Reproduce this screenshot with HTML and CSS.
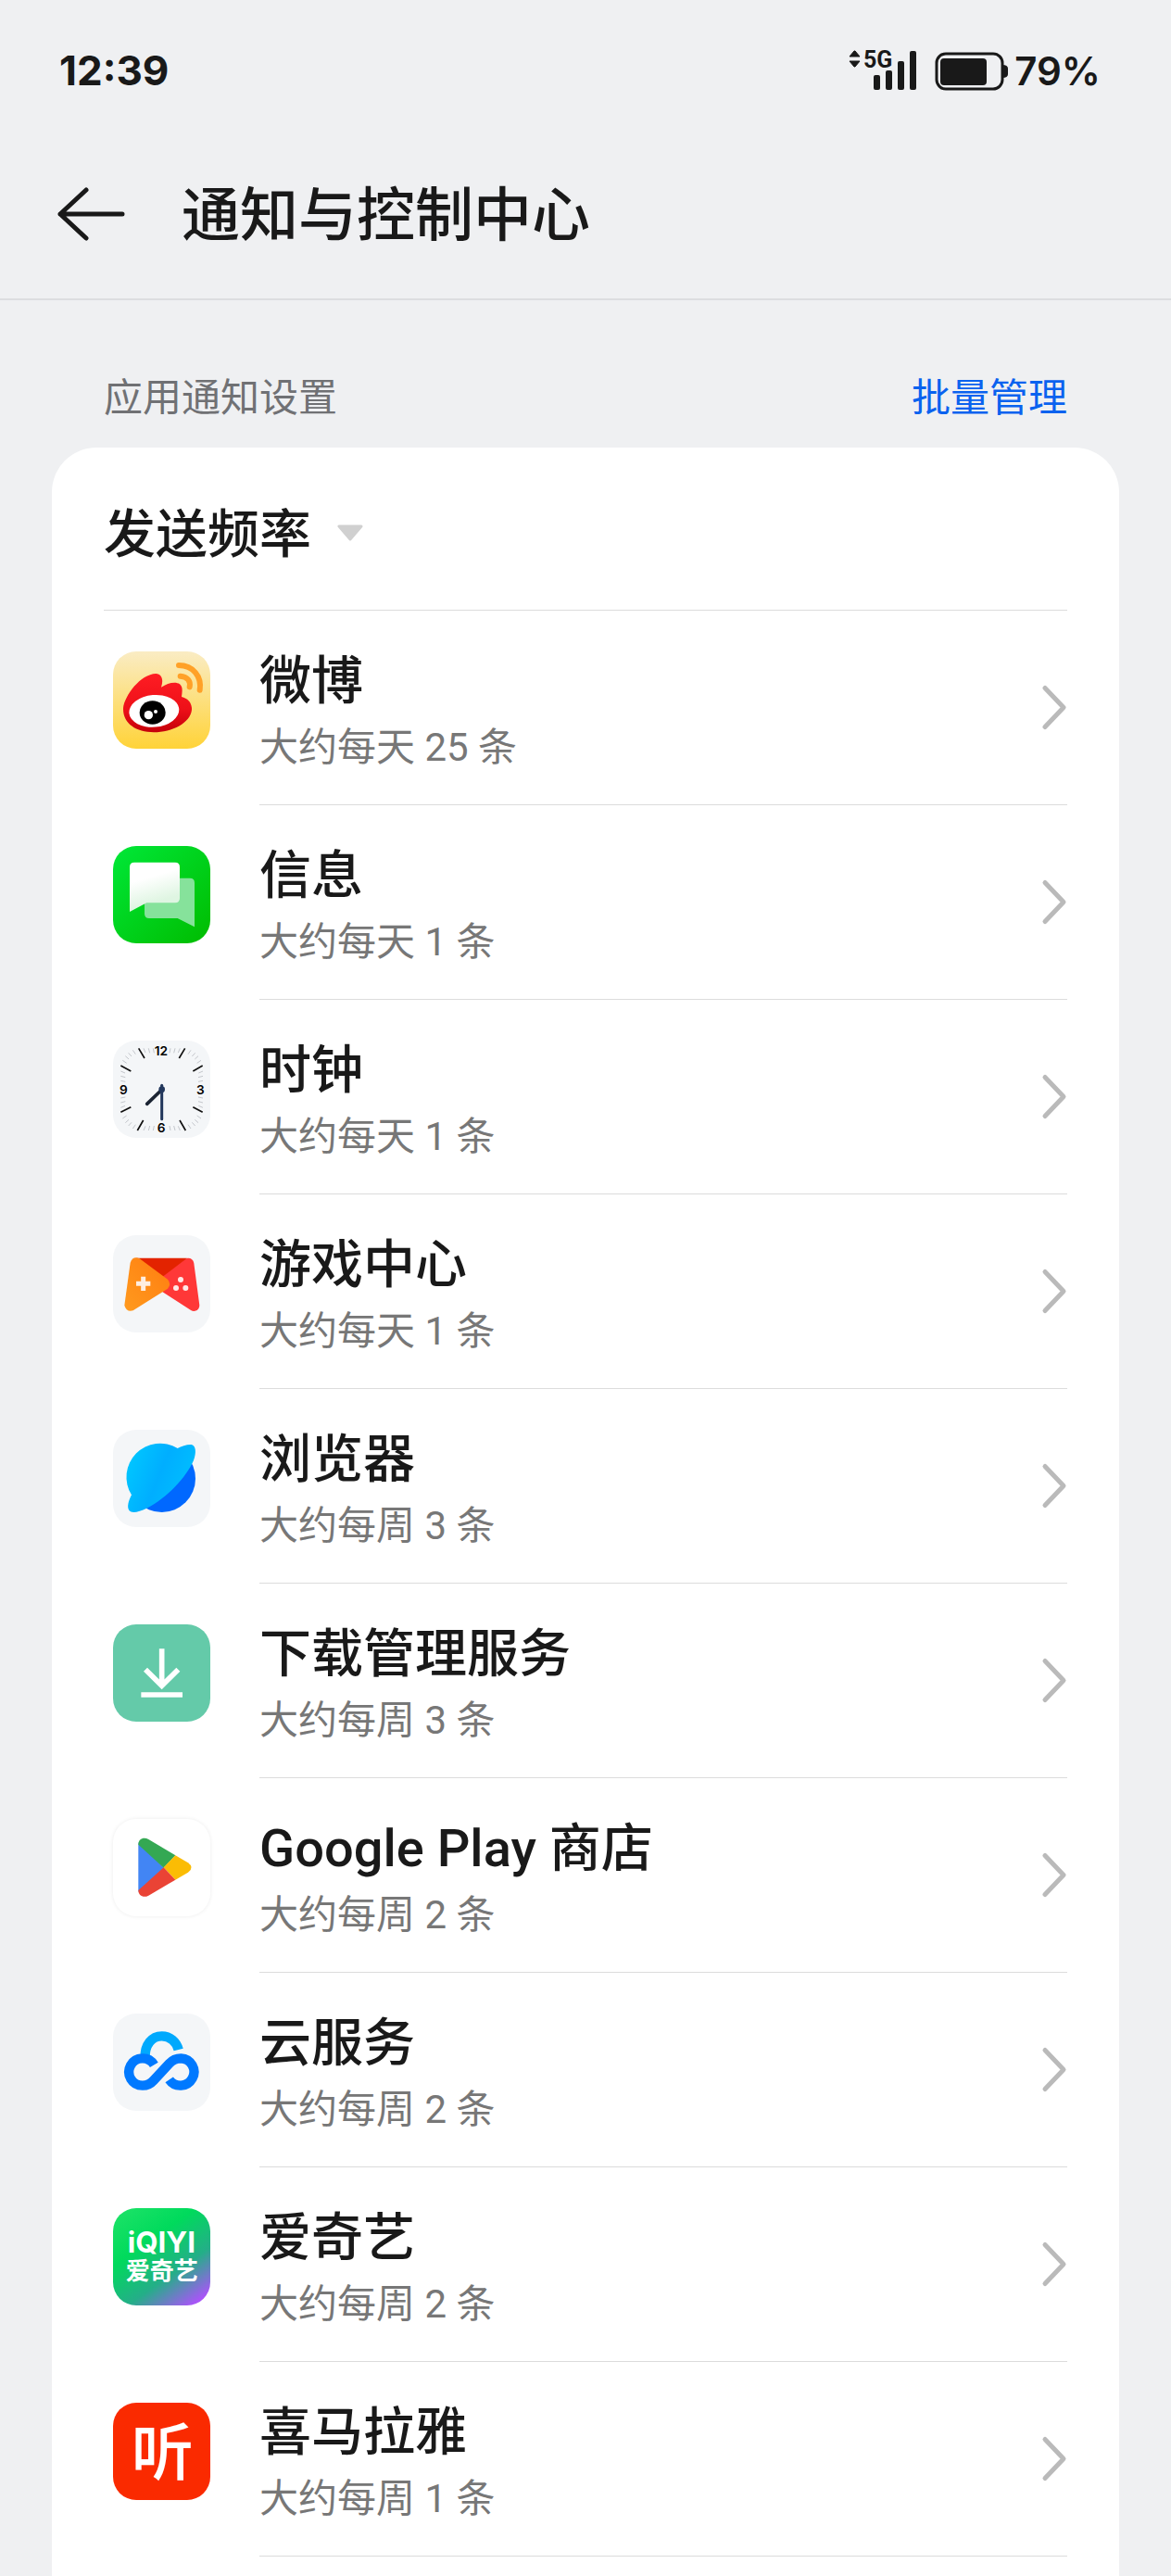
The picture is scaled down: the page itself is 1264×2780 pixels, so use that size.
FILE: index.html
```html
<!DOCTYPE html>
<html lang="zh-CN">
<head>
    <meta charset="UTF-8">
    <meta name="viewport" content="width=device-width, initial-scale=1.0">
    <title>通知与控制中心</title>
    <link rel="stylesheet" href="styles.css">
</head>
<body>
    <div class="status-bar">
        <span class="time">12:39</span>
        <div class="status-icons">
            <svg class="signal" width="76" height="56" viewBox="0 -4 76 56" aria-hidden="true">
                <path d="M2 9h11L8 3h-1zM2 14h11l-5 6h-1z" stroke="#191919" stroke-width="1" stroke-linejoin="round"/>
                <text x="17" y="21">5G</text>
                <rect x="28" y="29" width="7" height="16" rx="2"/>
                <rect x="41" y="24" width="7" height="21" rx="2"/>
                <rect x="54" y="14" width="7" height="31" rx="2"/>
                <rect x="67" y="3" width="7" height="42" rx="2"/>
            </svg>
            <svg class="battery" width="80" height="48" viewBox="0 0 80 48" aria-hidden="true">
                <rect x="2" y="6" width="71" height="38" rx="10" fill="none" stroke="#191919" stroke-width="3"/>
                <rect x="6" y="11" width="50" height="29" rx="4"/>
                <path d="M73 18q6 0 6 4v6q0 4-6 4z"/>
            </svg>
            <span class="percent">79%</span>
        </div>
    </div>

    <header class="title-bar">
        <button class="back" type="button" aria-label="返回">
            <svg width="76" height="64" viewBox="0 0 76 64" fill="none" stroke="#191919" stroke-width="5" stroke-linecap="round" stroke-linejoin="round">
                <path d="M33 6L5 32l28 26M5 32h67"/>
            </svg>
        </button>
        <h1>通知与控制中心</h1>
    </header>

    <main>
        <div class="section-head">
            <h2>应用通知设置</h2>
            <a href="#batch">批量管理</a>
        </div>

        <div class="card">
            <div class="sort">
                <select aria-label="排序">
                    <option>发送频率</option>
                </select>
                <svg width="28" height="18" viewBox="0 0 28 18" aria-hidden="true">
                    <path d="M2 2h24L14 16z" fill="#d0d0d0" stroke="#d0d0d0" stroke-width="3" stroke-linejoin="round"/>
                </svg>
            </div>

            <ul class="apps">
                <li>
                    <a class="app" href="#weibo">
                        <svg class="icon weibo" viewBox="66 69 315 315" aria-hidden="true">
                            <defs>
                                <linearGradient id="red" x1="0" y1="0" x2="0" y2="1">
                                    <stop offset="0" stop-color="#ff1d24"/>
                                    <stop offset="0.6" stop-color="#ee1018"/>
                                    <stop offset="1" stop-color="#c4000a"/>
                                </linearGradient>
                            </defs>
                            <path fill="url(#red)" d="M99 252C104 212 155 142 205 141c20 2 25 20 17 44 20-13 46-20 60-10 11 9 8 25 6 41 21 5 34 20 33 42-4 42-63 73-123 73-58 0-101-29-99-79z"/>
                            <ellipse cx="199" cy="262" rx="81" ry="52" fill="#fff" transform="rotate(-5 199 262)"/>
                            <ellipse cx="194" cy="267" rx="42" ry="38"/>
                            <circle cx="181" cy="275" r="14" fill="#fff"/>
                            <circle cx="204" cy="264" r="6" fill="#fff"/>
                            <path d="M279 114c46 0 75 36 68 80M284 149c23 2 34 16 30 35" fill="none" stroke="#ffa128" stroke-width="18" stroke-linecap="round"/>
                        </svg>
                        <span class="info"><span class="name">微博</span><span class="rate">大约每天 25 条</span></span>
                        <svg class="chevron" viewBox="0 0 28 52" aria-hidden="true"><path d="M4 5l20 21L4 47"/></svg>
                    </a>
                </li>
                <li>
                    <a class="app" href="#messages">
                        <svg class="icon messages" viewBox="66 69 315 315" aria-hidden="true">
                            <defs>
                                <linearGradient id="bubble" x1="0.3" y1="0" x2="0.6" y2="1">
                                    <stop offset="0.3" stop-color="#fff"/>
                                    <stop offset="0.8" stop-color="#dff5e2"/>
                                </linearGradient>
                            </defs>
                            <path fill="#86e29b" d="M183 173h132q15 0 15 15v143l-55-28h-92q-15 0-15-15V188q0-15 15-15z"/>
                            <path fill="url(#bubble)" d="M135 122h132q15 0 15 15v101q0 15-15 15h-92l-55 29V137q0-15 15-15z"/>
                        </svg>
                        <span class="info"><span class="name">信息</span><span class="rate">大约每天 1 条</span></span>
                        <svg class="chevron" viewBox="0 0 28 52" aria-hidden="true"><path d="M4 5l20 21L4 47"/></svg>
                    </a>
                </li>
                <li>
                    <a class="app" href="#clock">
                        <svg class="icon plain clock" viewBox="66 69 315 315" aria-hidden="true">
                            <defs>
                                <path id="ticks" d="M28-133l-3 15M43-133l-4 15M59-133l-6 14M94-127l-9 13M108-118l-10 11" stroke="#c3c6cb" stroke-width="3"/>
                                <g id="side">
                                    <use href="#ticks"/>
                                    <use href="#ticks" transform="scale(-1 1)"/>
                                </g>
                            </defs>
                            <g transform="translate(224 227)">
                                <use href="#side"/>
                                <use href="#side" transform="rotate(90)"/>
                                <use href="#side" transform="rotate(180)"/>
                                <use href="#side" transform="rotate(270)"/>
                            </g>
                            <path stroke="#111" stroke-width="5" d="M149 94l19 32M299 94l-19 32M356 150l-31 18M356 301l-31-17M301 360l-19-33M145 360l19-33M91 150l33 18M91 301l33-17"/>
                            <text x="222" y="118">12</text>
                            <text x="349" y="243">3</text>
                            <text x="222" y="367">6</text>
                            <text x="100" y="243">9</text>
                            <path stroke="#1b2433" stroke-width="11" stroke-linecap="round" d="M224 228l-48 46"/>
                            <path stroke="#22375c" stroke-width="9" stroke-linecap="round" d="M224 214v109"/>
                            <circle cx="224" cy="227" r="10" fill="#22375c"/>
                        </svg>
                        <span class="info"><span class="name">时钟</span><span class="rate">大约每天 1 条</span></span>
                        <svg class="chevron" viewBox="0 0 28 52" aria-hidden="true"><path d="M4 5l20 21L4 47"/></svg>
                    </a>
                </li>
                <li>
                    <a class="app" href="#games">
                        <svg class="icon plain" viewBox="66 69 315 315" aria-hidden="true">
                            <defs>
                                <linearGradient id="orange" x1="0" y1="1" x2="1" y2="0">
                                    <stop offset="0" stop-color="#ff9a1e"/>
                                    <stop offset="1" stop-color="#ff7d10"/>
                                </linearGradient>
                            </defs>
                            <path fill="#ff3838" stroke="#ff3838" stroke-width="36" stroke-linejoin="round" d="M310 161l-90 66 108 70z"/>
                            <path fill="#e32300" d="M140 143h166l-81 62z"/>
                            <path fill="url(#orange)" d="M152 145l91 67q13 15 0 30l-112 71q-22 6-28-17l19-138q9-24 30-13z"/>
                            <path stroke="#ffeee0" stroke-width="15" d="M141 226h46M164 203v46"/>
                            <g fill="#ffe9e6">
                                <circle cx="285" cy="213" r="9"/>
                                <circle cx="270" cy="240" r="9"/>
                                <circle cx="301" cy="240" r="9"/>
                            </g>
                        </svg>
                        <span class="info"><span class="name">游戏中心</span><span class="rate">大约每天 1 条</span></span>
                        <svg class="chevron" viewBox="0 0 28 52" aria-hidden="true"><path d="M4 5l20 21L4 47"/></svg>
                    </a>
                </li>
                <li>
                    <a class="app" href="#browser">
                        <svg class="icon plain" viewBox="66 69 315 315" aria-hidden="true">
                            <defs>
                                <linearGradient id="sky" x1="0" y1="0.2" x2="1" y2="0.6">
                                    <stop offset="0" stop-color="#00c8ff"/>
                                    <stop offset="0.5" stop-color="#00aeff"/>
                                    <stop offset="1" stop-color="#00c0ff"/>
                                </linearGradient>
                            </defs>
                            <circle cx="224" cy="227" r="109" fill="#0068ff"/>
                            <path fill="url(#sky)" d="M175 323c68-34 128-101 152-155 9-25 8-47-7-51-15-1-32 6-45 12A109 109 0 0 0 126 280c-9 17-16 38-8 50 9 11 32 5 57-7z"/>
                        </svg>
                        <span class="info"><span class="name">浏览器</span><span class="rate">大约每周 3 条</span></span>
                        <svg class="chevron" viewBox="0 0 28 52" aria-hidden="true"><path d="M4 5l20 21L4 47"/></svg>
                    </a>
                </li>
                <li>
                    <a class="app" href="#downloads">
                        <svg class="icon downloads" viewBox="66 69 315 315" aria-hidden="true">
                            <path fill="none" stroke="#fff" stroke-width="17" d="M224 148v120M171 215l53 53 53-53M157 297h134"/>
                        </svg>
                        <span class="info"><span class="name">下载管理服务</span><span class="rate">大约每周 3 条</span></span>
                        <svg class="chevron" viewBox="0 0 28 52" aria-hidden="true"><path d="M4 5l20 21L4 47"/></svg>
                    </a>
                </li>
                <li>
                    <a class="app" href="#play">
                        <svg class="icon play" viewBox="66 69 315 315" aria-hidden="true">
                            <path fill="#4285f4" d="M149 145l82 82-82 78q-1-2-1-7V152z"/>
                            <path fill="#34a853" d="M148 152c0-17 16-26 33-17l87 52-38 40z"/>
                            <path fill="#fbbc04" d="M268 187l41 24q22 16 0 31l-41 24-38-40z"/>
                            <path fill="#ea4335" d="M230 226l38 40-87 51c-17 9-33 0-33-17z"/>
                        </svg>
                        <span class="info"><span class="name">Google Play 商店</span><span class="rate">大约每周 2 条</span></span>
                        <svg class="chevron" viewBox="0 0 28 52" aria-hidden="true"><path d="M4 5l20 21L4 47"/></svg>
                    </a>
                </li>
                <li>
                    <a class="app" href="#cloud">
                        <svg class="icon plain" viewBox="66 69 315 315" aria-hidden="true">
                            <g fill="none" stroke-width="31">
                                <path stroke="#00a9fd" d="M170 212c-2-42 22-70 54-70 26 0 48 18 54 44"/>
                                <path stroke="#0079ff" d="M199 235A44 44 0 1 0 162 302c16 0 28-8 36-17l50-54c10-11 20-17 38-17a44 44 0 1 1-38 69"/>
                            </g>
                        </svg>
                        <span class="info"><span class="name">云服务</span><span class="rate">大约每周 2 条</span></span>
                        <svg class="chevron" viewBox="0 0 28 52" aria-hidden="true"><path d="M4 5l20 21L4 47"/></svg>
                    </a>
                </li>
                <li>
                    <a class="app" href="#iqiyi">
                        <svg class="icon iqiyi" viewBox="66 69 315 315" aria-hidden="true">
                            <text class="latin" x="223" y="213">iQIYI</text>
                            <text class="han" x="224" y="301">爱奇艺</text>
                        </svg>
                        <span class="info"><span class="name">爱奇艺</span><span class="rate">大约每周 2 条</span></span>
                        <svg class="chevron" viewBox="0 0 28 52" aria-hidden="true"><path d="M4 5l20 21L4 47"/></svg>
                    </a>
                </li>
                <li>
                    <a class="app" href="#ximalaya">
                        <svg class="icon ximalaya" viewBox="66 69 315 315" aria-hidden="true">
                            <text x="226" y="304">听</text>
                        </svg>
                        <span class="info"><span class="name">喜马拉雅</span><span class="rate">大约每周 1 条</span></span>
                        <svg class="chevron" viewBox="0 0 28 52" aria-hidden="true"><path d="M4 5l20 21L4 47"/></svg>
                    </a>
                </li>
            </ul>
        </div>
    </main>
</body>
</html>
```

FILE: styles.css
```css
* {
    box-sizing: border-box;
}
body {
    margin: 0;
    min-height: 100vh;
    display: flex;
    flex-direction: column;
    background: #eff0f2;
    color: #191919;
    font-family: Roboto, "Noto Sans CJK SC", sans-serif;
}
a {
    color: inherit;
    text-decoration: none;
}

/* status bar */
.status-bar {
    display: flex;
    justify-content: space-between;
    align-items: center;
    height: 152px;
    padding: 0 76px 0 64px;
    font-family: Inter, sans-serif;
    font-weight: 700;
    font-size: 44px;
}
.status-icons {
    display: flex;
    align-items: center;
    fill: #191919;
}
.signal text {
    font: 700 25px Roboto, sans-serif;
}
.battery {
    margin: 0 6px 0 18px;
}
.percent {
    font-size: 42px;
    font-weight: 600;
}

/* title */
.title-bar {
    display: flex;
    align-items: center;
    gap: 60px;
    height: 172px;
    padding: 0 60px 12px;
    border-bottom: 2px solid #dcdde0;
}
.back {
    padding: 0;
    border: none;
    background: none;
    cursor: pointer;
}
.back svg {
    display: block;
}
h1 {
    margin: 0;
    padding-top: 4px;
    font-size: 63px;
    line-height: 72px;
    font-weight: 500;
}

main {
    flex: 1;
    display: flex;
    flex-direction: column;
    padding: 0 56px;
}
.section-head {
    display: flex;
    justify-content: space-between;
    padding: 78px 56px 25px;
    font-size: 42px;
    line-height: 56px;
}
.section-head h2 {
    margin: 0;
    font-size: 42px;
    font-weight: 400;
    color: #707174;
}
.section-head a {
    color: #0a62ef;
}

/* app list */
.card {
    flex: 1;
    padding: 0 56px;
    background: #fff;
    border-radius: 48px 48px 0 0;
}
.sort {
    display: flex;
    align-items: center;
    gap: 28px;
    height: 176px;
    padding-top: 12px;
    border-bottom: 1px solid #dcdcdc;
}
.sort select {
    appearance: none;
    padding: 0;
    border: none;
    background: none;
    color: inherit;
    font: inherit;
    font-size: 56px;
    line-height: 72px;
    font-weight: 500;
}
.sort svg {
    margin-bottom: 4px;
}
.apps {
    margin: 0;
    padding: 0;
    list-style: none;
}
.app {
    display: flex;
    height: 210px;
    padding-left: 10px;
}
.icon {
    flex: none;
    width: 105px;
    height: 105px;
    margin: 44px 53px 0 0;
    border-radius: 25px;
}
.info {
    flex: 1;
    display: flex;
    flex-direction: column;
    gap: 12px;
    padding-top: 44px;
    border-bottom: 1px solid #dcdcdc;
}
.name {
    font-size: 56px;
    line-height: 64px;
    font-weight: 500;
}
.rate {
    font-size: 42px;
    line-height: 56px;
    color: #777;
}
.chevron {
    flex: none;
    width: 28px;
    height: 210px;
    border-bottom: 1px solid #dcdcdc;
    fill: none;
    stroke: #bababa;
    stroke-width: 5px;
    stroke-linecap: round;
    stroke-linejoin: round;
}

.plain {
    background: #f4f6f8;
}
.weibo {
    background: linear-gradient(#faecc4, #ffd338);
}
.messages {
    background: linear-gradient(135deg, #00e838, #00bc00);
}
.clock text {
    font: 600 41px Inter, sans-serif;
    text-anchor: middle;
}
.downloads {
    background: #64caa9;
}
.play {
    background: #fff;
    box-shadow: 0 0 4px rgba(0, 0, 0, 0.08);
}
.iqiyi {
    background: linear-gradient(145deg, #1fe368, #00da5c 35%, #24ae88 65%, #a855f7 92%);
}
.iqiyi text {
    fill: #fff;
    text-anchor: middle;
}
.iqiyi .latin {
    font: 700 94px Inter, sans-serif;
}
.iqiyi .han {
    font: 700 78px "Noto Sans CJK SC", sans-serif;
}
.ximalaya {
    background: #fa2a00;
}
.ximalaya text {
    font: 500 202px "Noto Sans CJK SC", sans-serif;
    fill: #fff;
    text-anchor: middle;
}
```
